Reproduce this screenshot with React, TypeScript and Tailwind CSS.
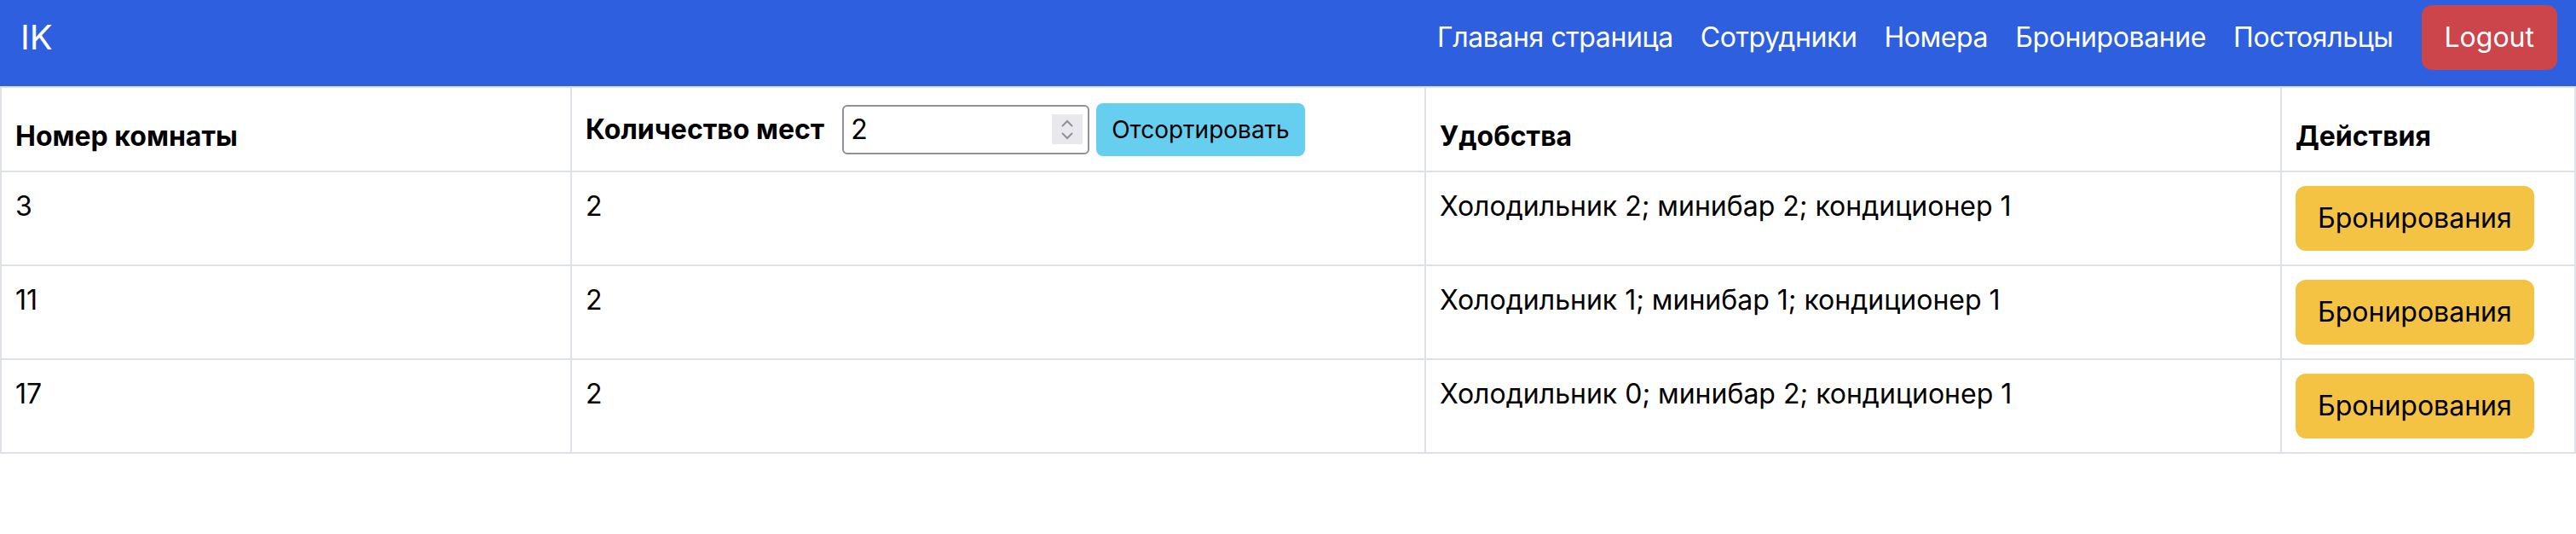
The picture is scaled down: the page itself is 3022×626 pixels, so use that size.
import React from "react";

const rooms = [
  { number: "3", places: "2", amenities: "Холодильник 2; минибар 2; кондиционер 1" },
  { number: "11", places: "2", amenities: "Холодильник 1; минибар 1; кондиционер 1" },
  { number: "17", places: "2", amenities: "Холодильник 0; минибар 2; кондиционер 1" },
];

const links = ["Главаня страница", "Сотрудники", "Номера", "Бронирование", "Постояльцы"];

function Navbar() {
  return (
    <nav className="flex items-start justify-between bg-[#2d5fdf] h-[101px] pt-[6px] pl-[24px] pr-[22px]">
      <div className="flex items-center h-[76px]">
        <span className="text-white text-[40px] leading-none">IK</span>
      </div>
      <div className="flex items-center h-[76px]">
        {links.map((l) => (
          <a key={l} className="text-white text-[32px] leading-[48px] px-[16px] tracking-[-0.4px]">
            {l}
          </a>
        ))}
        <button className="ml-[17px] h-[76px] px-[27px] rounded-[12px] bg-[#cb454b] text-white text-[32px]">
          Logout
        </button>
      </div>
    </nav>
  );
}

function SpinnerBox() {
  return (
    <div className="flex flex-col items-center justify-center w-[36px] h-[35px] bg-[#e9e9ed] mr-[6px]">
      <svg width="16" height="10" viewBox="0 0 16 10" fill="none" stroke="#8f8f9d" strokeWidth="2">
        <path d="M2 8 L8 2 L14 8" />
      </svg>
      <svg width="16" height="10" viewBox="0 0 16 10" fill="none" stroke="#8f8f9d" strokeWidth="2" className="mt-[4px]">
        <path d="M2 2 L8 8 L14 2" />
      </svg>
    </div>
  );
}

function RoomsTable() {
  const cell = "border-2 border-[#dee2e6] p-[16px]";
  return (
    <table className="w-full table-fixed border-collapse text-[32px] leading-[48px] text-black">
      <colgroup>
        <col className="w-[669px]" />
        <col className="w-[1002px]" />
        <col className="w-[1004px]" />
        <col />
      </colgroup>
      <thead className="align-bottom">
        <tr>
          <th className={`${cell} text-left font-bold`}>Номер комнаты</th>
          <th className={`${cell} text-left font-bold`}>
            <div className="flex items-center h-[65px]">
              <span>Количество мест</span>
              <div className="flex items-center ml-[21px] w-[290px] h-[58px] border-2 border-[#8f8f9d] rounded-[6px] bg-white">
                <input
                  type="text"
                  defaultValue="2"
                  className="flex-1 min-w-0 pl-[8px] outline-none text-[32px] font-normal bg-transparent"
                />
                <SpinnerBox />
              </div>
              <button className="ml-[8px] h-[62px] px-[18px] rounded-[8px] bg-[#66cff0] text-[28px] font-normal">
                Отсортировать
              </button>
            </div>
          </th>
          <th className={`${cell} text-left font-bold`}>Удобства</th>
          <th className={`${cell} text-left font-bold`}>Действия</th>
        </tr>
      </thead>
      <tbody className="align-top">
        {rooms.map((r) => (
          <tr key={r.number}>
            <td className={cell}>{r.number}</td>
            <td className={cell}>{r.places}</td>
            <td className={cell}>{r.amenities}</td>
            <td className={cell}>
              <button className="h-[76px] px-[26px] rounded-[12px] bg-[#f4c344] text-black text-[32px]">
                Бронирования
              </button>
            </td>
          </tr>
        ))}
      </tbody>
    </table>
  );
}

export default function App() {
  return (
    <div className="min-h-[626px] bg-white font-['Inter',sans-serif]">
      <Navbar />
      <RoomsTable />
    </div>
  );
}
